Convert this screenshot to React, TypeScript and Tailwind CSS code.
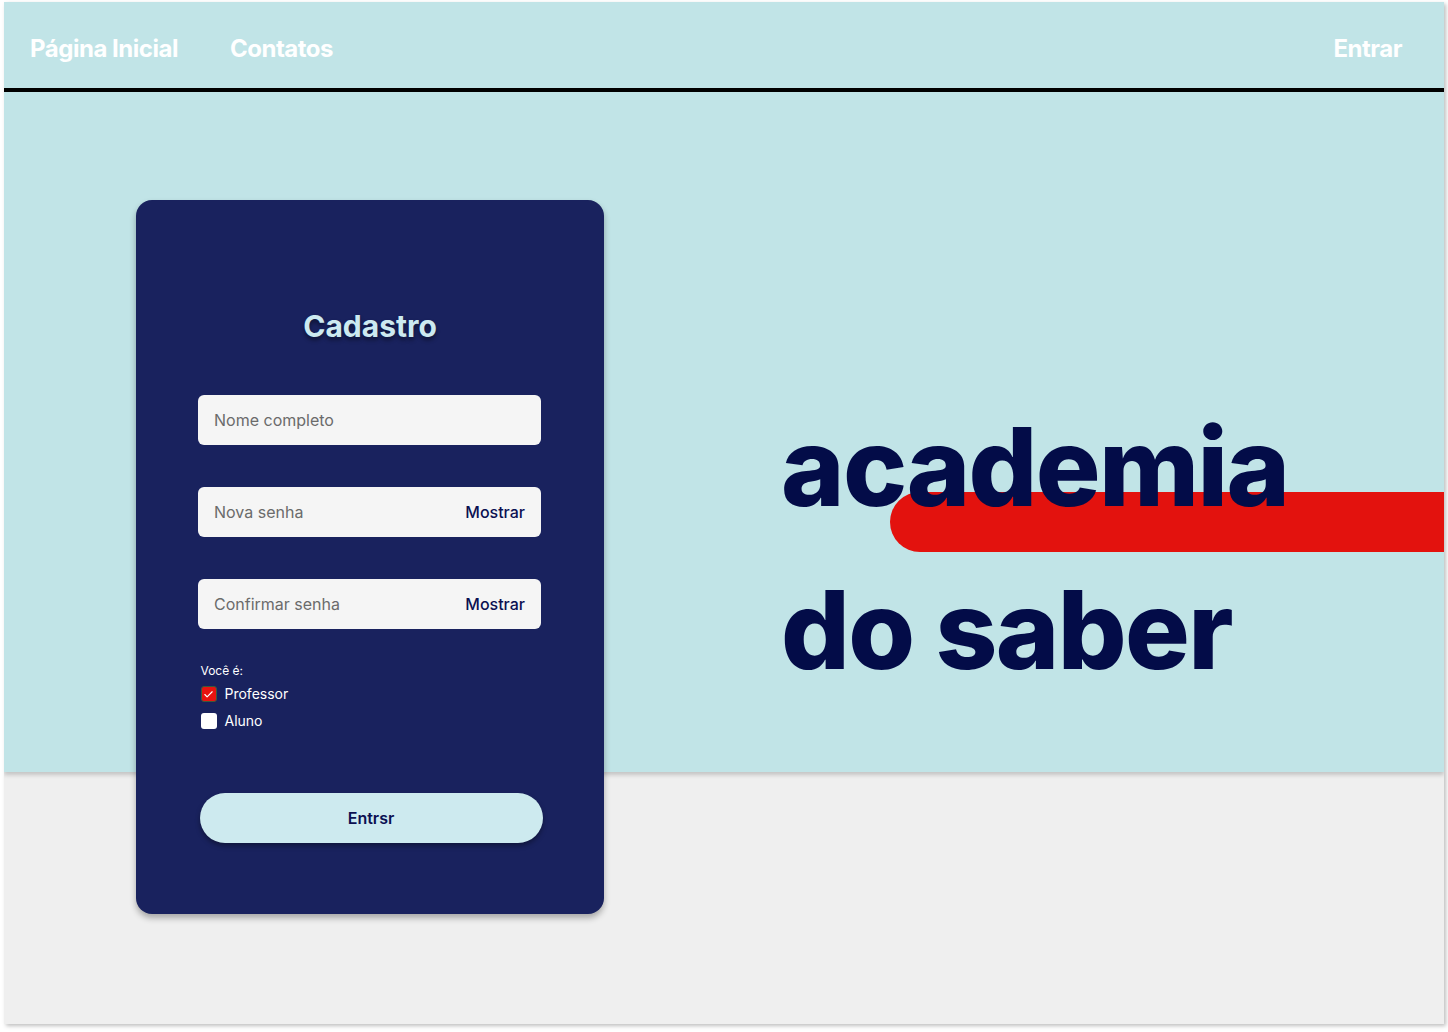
import { Check } from "lucide-react";

const FONT = { fontFamily: "Inter, 'Noto Sans', sans-serif" } as const;

function Field({ placeholder, action }: { placeholder: string; action?: string }) {
  return (
    <div className="flex h-[50px] w-[343px] items-center justify-between rounded-md bg-[#f5f5f5] px-4">
      <span className="text-base text-[#6b6b6b]">{placeholder}</span>
      {action && <span className="text-base font-medium text-[#0b1052]">{action}</span>}
    </div>
  );
}

function Signup() {
  return (
    <div className="relative z-10 flex h-[714px] w-[468px] shrink-0 flex-col items-center rounded-2xl bg-[#19225e] shadow-[0_4px_6px_rgba(0,0,0,0.3)]">
      <h1 className="mt-[104px] text-[30px] font-bold text-[#cdeaf0] [text-shadow:0_3px_4px_rgba(0,0,0,0.45)]">
        Cadastro
      </h1>
      <div className="mr-[1px] mt-[46px] flex flex-col gap-[42px]">
        <Field placeholder="Nome completo" />
        <Field placeholder="Nova senha" action="Mostrar" />
        <Field placeholder="Confirmar senha" action="Mostrar" />
      </div>
      <div className="mt-[34px] w-[343px] pl-[2px] text-white">
        <p className="text-xs">Você é:</p>
        <label className="mt-[5px] flex items-center gap-2 text-sm">
          <span className="flex h-4 w-4 items-center justify-center rounded-[3px] border border-[#3d5a3a] bg-[#e8130f]">
            <Check size={11} strokeWidth={2.5} className="text-white" />
          </span>
          Professor
        </label>
        <label className="mt-[7px] flex items-center gap-2 text-sm">
          <span className="h-4 w-4 rounded-[3px] bg-white" />
          Aluno
        </label>
      </div>
      <button className="ml-[2px] mt-[62px] h-[50px] w-[343px] rounded-full bg-[#cdeaef] text-base font-semibold text-[#0b1052] shadow-[0_3px_5px_rgba(0,0,0,0.35)]">
        Entrsr
      </button>
    </div>
  );
}

export default function App() {
  return (
    <div style={FONT} className="h-[1032px] w-[1448px] bg-white pl-[4px] pt-[2px]">
      <div className="flex h-[1022px] w-[1440px] flex-col overflow-hidden bg-[#efefef] shadow-[2px_2px_4px_rgba(0,0,0,0.25)]">
        <header className="flex h-[86px] shrink-0 items-center bg-[#c1e4e7] pl-[26px] pr-[42px] pt-2 text-2xl font-bold tracking-[-0.02em] text-white">
          <nav className="flex gap-[52px]">
            <a>Página Inicial</a>
            <a>Contatos</a>
          </nav>
          <a className="ml-auto">Entrar</a>
        </header>
        <div className="h-1 shrink-0 bg-black" />
        <section className="relative flex h-[680px] shrink-0 bg-[#c1e4e7] pl-[132px] pt-[108px] shadow-[0_3px_4px_rgba(0,0,0,0.18)]">
          <Signup />
          <div className="relative ml-[177px] flex-1 pt-[285px]">
            <div className="absolute left-[109px] right-0 top-[292px] h-[60px] rounded-l-full bg-[#e3120e]" />
            <h2 className="relative text-[108px] font-extrabold leading-[163px] tracking-[-0.015em] text-[#030c48]">
              <span className="block -mt-[100px]">academia</span>
              <span className="block">do saber</span>
            </h2>
          </div>
        </section>
      </div>
    </div>
  );
}
